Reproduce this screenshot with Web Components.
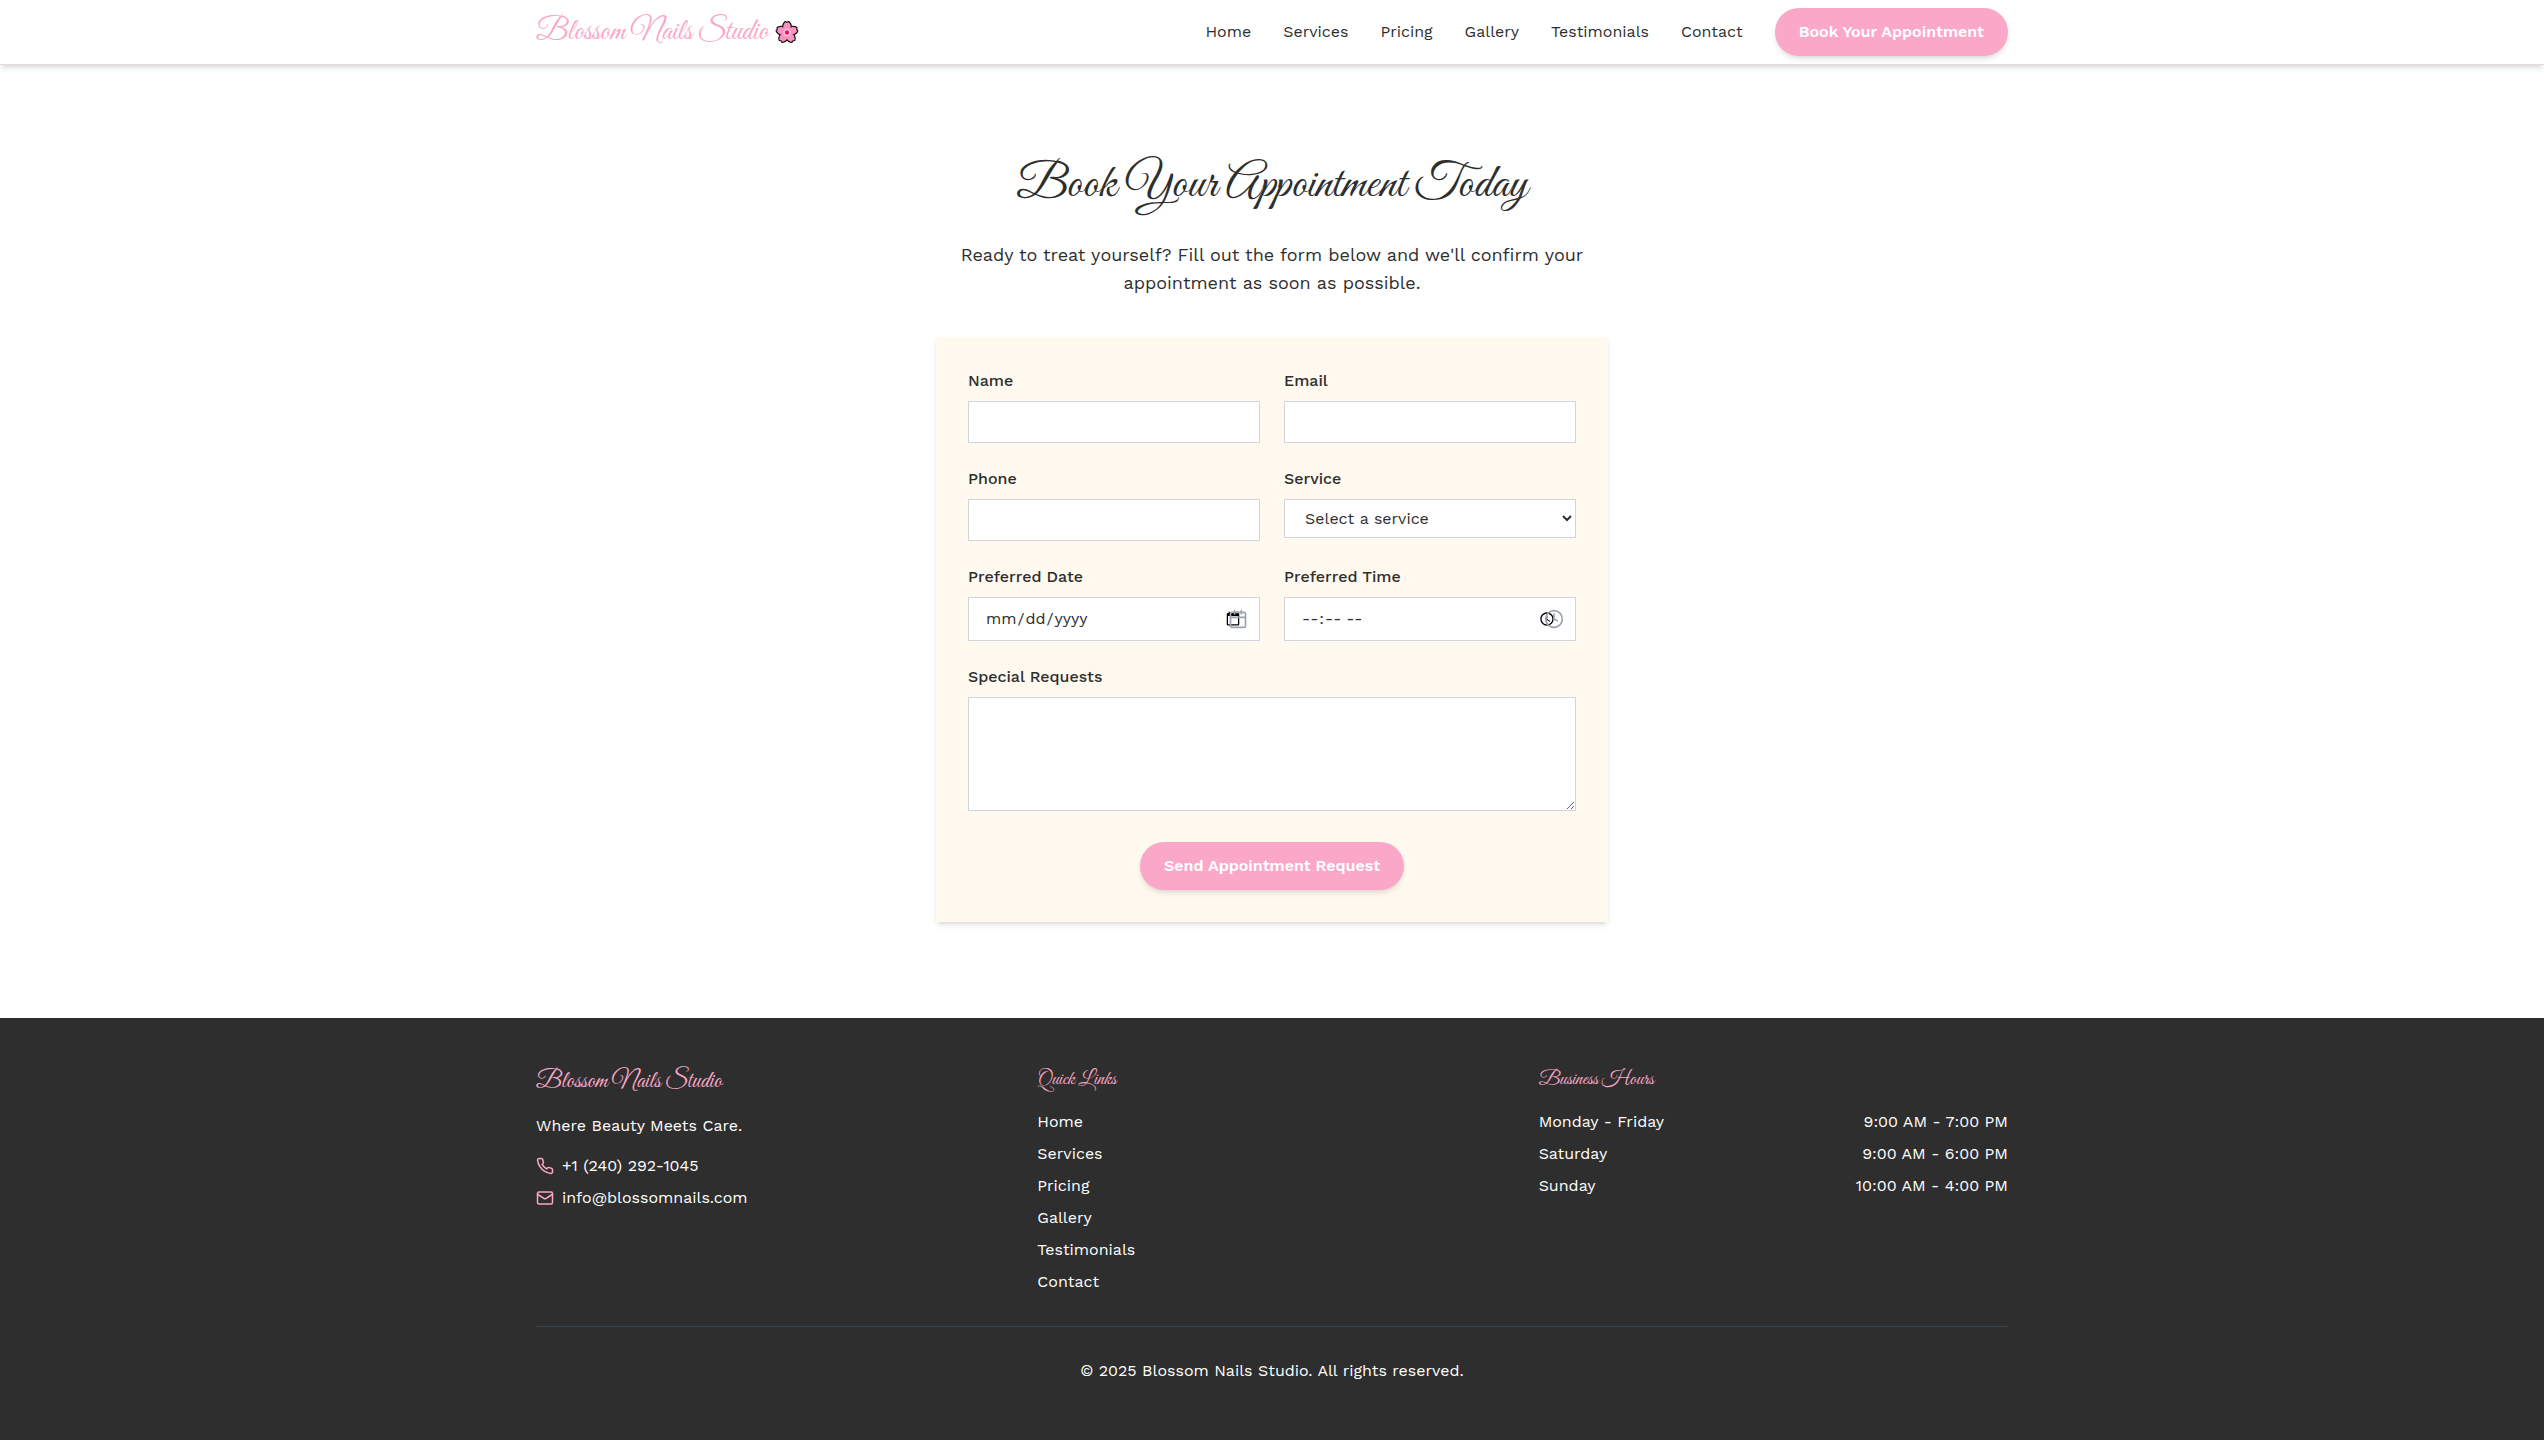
<!DOCTYPE html>
<html lang="en">
<head>
<meta charset="utf-8">
<title>Blossom Nails Studio</title>
<style>
  html { --pink: #fba7c8; --ink: #2e2e2e; --cream: #fff9f0; --line: #d1d5db; --script: "Great Vibes", "Liberation Serif", serif; --sans: "Work Sans", Inter, "Open Sans", sans-serif; }
  body { margin: 0; background: #fff; color: var(--ink); font: 16px/24px var(--sans); }
</style>
</head>
<body>
<booking-page></booking-page>
<script>
const sections = ["Home", "Services", "Pricing", "Gallery", "Testimonials", "Contact"];
const reset = `*, *::before, *::after { box-sizing: border-box; } h2, h3, h4, p, ul, dl, dd { margin: 0; padding: 0; } ul { list-style: none; } a { color: inherit; text-decoration: none; }
  .wrap { max-width: 1536px; margin: 0 auto; padding: 0 32px; }`;

function define(name, render) {
  customElements.define(name, class extends HTMLElement {
    connectedCallback() {
      if (this.shadowRoot) return;
      const t = document.createElement("template");
      t.innerHTML = render(this);
      this.attachShadow({ mode: "open" }).append(t.content.cloneNode(true));
    }
  });
}

const petals = [0, 72, 144, 216, 288].map(a => `<use href="#p" transform="rotate(${a} 12 12.500)"/>`).join("");
define("blossom-icon", () => `<style>:host { display: block; width: 24px; height: 24px; } svg { display: block; }</style>
  <svg width="24" height="24" viewBox="0 0 24 24" aria-hidden="true">
    <defs><path id="p" d="M12 12.500C8.200 10 6.900 5.500 10.400 2.200L12 3L13.600 2.200C17.100 5.500 15.800 10 12 12.500Z"/></defs>
    <g fill="#000" stroke="#000" stroke-width="2.400" stroke-linejoin="round">${petals}</g>
    <g fill="#fb93c2" stroke="#f083b2" stroke-width=".3">${petals}</g>
    <circle cx="12" cy="12.500" r="3.200" fill="none" stroke="#ffe3ef" stroke-width="1.300" stroke-dasharray="1.300 .710"/>
    <circle cx="12" cy="12.500" r="2" fill="#e0125f"/>
  </svg>`);

const glyphs = {
  phone: `<path d="M22 16.920v3a2 2 0 0 1-2.180 2 19.790 19.790 0 0 1-8.630-3.070 19.500 19.500 0 0 1-6-6 19.790 19.790 0 0 1-3.070-8.670A2 2 0 0 1 4.110 2h3a2 2 0 0 1 2 1.720 12.840 12.840 0 0 0 .7 2.810 2 2 0 0 1-.45 2.110L8.090 9.910a16 16 0 0 0 6 6l1.270-1.270a2 2 0 0 1 2.110-.45 12.840 12.840 0 0 0 2.810.7A2 2 0 0 1 22 16.920z"/>`,
  mail: `<rect width="20" height="16" x="2" y="4" rx="2"/><path d="m22 7-8.970 5.700a1.940 1.940 0 0 1-2.060 0L2 7"/>`,
  date: `<path d="M8 2v4M16 2v4M3 10h18"/><rect width="18" height="18" x="3" y="4" rx="2"/>`,
  time: `<circle cx="12" cy="12" r="10"/><path d="M12 6v6l4 2"/>`
};
define("line-icon", el => `<style>:host { display: block; flex: none; } svg { display: block; width: var(--size, 18px); height: var(--size, 18px); }</style>
  <svg viewBox="0 0 24 24" fill="none" stroke="currentColor" stroke-width="2" stroke-linecap="round" stroke-linejoin="round" aria-hidden="true">${glyphs[el.getAttribute("name")]}</svg>`);

define("pill-button", () => `<style>${reset}
  :host { display: inline-block; }
  button { display: block; height: 48px; padding: 0 24px; border: 0; border-radius: 24px; background: var(--pink); color: #fff; font: 600 16px/24px var(--sans); cursor: pointer; white-space: nowrap; box-shadow: 0 4px 6px -1px rgba(0,0,0,.1), 0 2px 4px -2px rgba(0,0,0,.1); }
  </style><button type="button"><slot></slot></button>`);

define("site-header", () => `<style>${reset}
  :host { display: block; position: relative; background: #fff; border-bottom: 1px solid #e5dcd8; box-shadow: 0 4px 6px -1px rgba(0,0,0,.1), 0 2px 4px -2px rgba(0,0,0,.1); }
  .wrap { display: flex; align-items: center; justify-content: space-between; height: 64px; }
  .logo { display: flex; align-items: center; gap: 6px; color: var(--pink); font: 30px/36px var(--script); }
  nav, ul { display: flex; align-items: center; gap: 32px; }
  </style>
  <div class="wrap">
    <a class="logo" href="#home"><span>Blossom Nails Studio</span><blossom-icon></blossom-icon></a>
    <nav><ul>${sections.map(s => `<li><a href="#${s.toLowerCase()}">${s}</a></li>`).join("")}</ul><pill-button>Book Your Appointment</pill-button></nav>
  </div>`);

define("form-field", el => {
  const type = el.getAttribute("type"), label = el.getAttribute("label");
  let control = `<input id="c" type="${type}">`;
  if (type === "select") control = `<select id="c"><option>Select a service</option></select>`;
  if (type === "textarea") control = `<textarea id="c"></textarea>`;
  if (type === "date" || type === "time") control += `<line-icon name="${type}"></line-icon>`;
  return `<style>${reset}
  :host { display: block; }
  label { display: block; margin-bottom: 8px; font-weight: 500; }
  .box { position: relative; }
  input, select, textarea { display: block; width: 100%; margin: 0; padding: 8px 16px; border: 1px solid var(--line); border-radius: 0; background: #fff; color: var(--ink); font: 16px/24px var(--sans); height: 42px; }
  select { height: 39px; }
  input[type=date], input[type=time] { height: 44px; }
  textarea { height: 114px; resize: vertical; }
  line-icon { --size: 20px; position: absolute; right: 12px; top: 12px; color: #9ca3af; pointer-events: none; }
  </style><label for="c">${label}</label><div class="box">${control}</div>`;
});

define("booking-form", () => `<style>${reset}
  :host { display: block; }
  form { display: grid; grid-template-columns: 1fr 1fr; gap: 24px; align-items: start; padding: 32px; background: var(--cream); box-shadow: 0 4px 6px -1px rgba(0,0,0,.1), 0 2px 4px -2px rgba(0,0,0,.1); }
  .full { grid-column: 1 / -1; }
  .send { padding-top: 7px; text-align: center; }
  pill-button { vertical-align: top; }
  </style>
  <form>
    <form-field type="text" label="Name"></form-field><form-field type="email" label="Email"></form-field>
    <form-field type="tel" label="Phone"></form-field><form-field type="select" label="Service"></form-field>
    <form-field type="date" label="Preferred Date"></form-field><form-field type="time" label="Preferred Time"></form-field>
    <form-field class="full" type="textarea" label="Special Requests"></form-field>
    <div class="full send"><pill-button>Send Appointment Request</pill-button></div>
  </form>`);

define("booking-section", () => `<style>${reset}
  :host { display: block; padding: 96px 32px; }
  .inner { max-width: 672px; margin: 0 auto; }
  h2 { margin-bottom: 32px; font: 400 48px/48px var(--script); text-align: center; }
  p { margin-bottom: 40px; font-size: 18px; line-height: 28px; text-align: center; }
  </style>
  <div class="inner"><h2>Book Your Appointment Today</h2>
  <p>Ready to treat yourself? Fill out the form below and we'll confirm your appointment as soon as possible.</p>
  <booking-form></booking-form></div>`);

define("site-footer", () => `<style>${reset}
  :host { display: block; padding: 48px 0; background: var(--ink); color: #fff; }
  .cols { display: grid; grid-template-columns: repeat(3, 1fr); gap: 32px; }
  h3, h4 { margin-bottom: 16px; color: var(--pink); font: 400 24px/32px var(--script); }
  h4 { font-size: 20px; line-height: 28px; }
  .tag { margin-bottom: 16px; }
  ul, dl { display: grid; gap: 8px; }
  .contact a { display: flex; align-items: center; gap: 8px; }
  line-icon { color: var(--pink); }
  dl div { display: flex; justify-content: space-between; }
  .legal { margin-top: 32px; padding-top: 32px; border-top: 1px solid #374151; text-align: center; }
  </style>
  <div class="wrap">
    <div class="cols">
      <section><h3>Blossom Nails Studio</h3><p class="tag">Where Beauty Meets Care.</p>
        <ul class="contact"><li><a href="tel:+12402921045"><line-icon name="phone"></line-icon>+1 (240) 292-1045</a></li>
        <li><a href="mailto:info@blossomnails.com"><line-icon name="mail"></line-icon>info@blossomnails.com</a></li></ul></section>
      <section><h4>Quick Links</h4><ul>${sections.map(s => `<li><a href="#${s.toLowerCase()}">${s}</a></li>`).join("")}</ul></section>
      <section><h4>Business Hours</h4><dl>
        <div><dt>Monday - Friday</dt><dd>9:00 AM - 7:00 PM</dd></div>
        <div><dt>Saturday</dt><dd>9:00 AM - 6:00 PM</dd></div>
        <div><dt>Sunday</dt><dd>10:00 AM - 4:00 PM</dd></div></dl></section>
    </div>
    <p class="legal">© 2025 Blossom Nails Studio. All rights reserved.</p>
  </div>`);

define("booking-page", () => `<style>
  :host { display: flex; flex-direction: column; min-height: 100vh; }
  site-footer { flex: 1; }
  </style><site-header></site-header><main><booking-section></booking-section></main><site-footer></site-footer>`);
</script>
</body>
</html>
